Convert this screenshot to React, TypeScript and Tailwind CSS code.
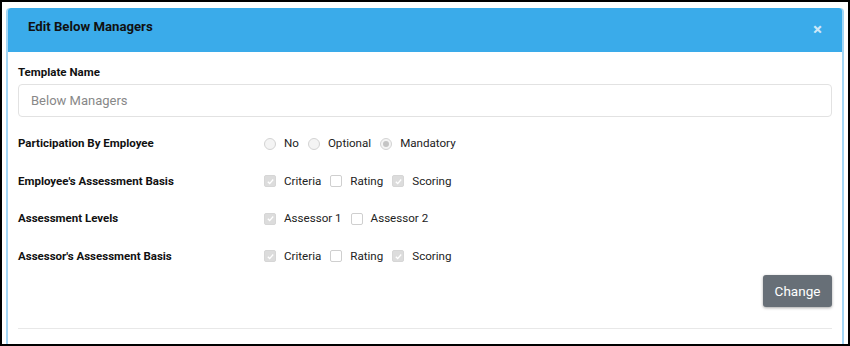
import { type FC } from 'react';

const Radio: FC<{ checked?: boolean; label: string }> = ({ checked, label }) => (
  <label className="flex items-center">
    <span className="flex h-[12px] w-[12px] items-center justify-center rounded-full border border-[#d3d3d3] bg-[#f4f4f4]">
      {checked && <span className="h-[6px] w-[6px] rounded-full bg-[#c4c4c4]" />}
    </span>
    <span className="ml-[8px] mr-[9px] text-[11.6px] text-[#222]">{label}</span>
  </label>
);

const Check: FC<{ checked?: boolean; label: string }> = ({ checked, label }) => (
  <label className="flex items-center">
    <span
      className={
        checked
          ? 'flex h-[12px] w-[12px] items-center justify-center rounded-[2px] border border-[#d6d6d6] bg-[#dcdcdc]'
          : 'flex h-[12px] w-[12px] items-center justify-center rounded-[2px] border border-[#cfcfcf] bg-white'
      }
    >
      {checked && (
        <svg viewBox="0 0 10 10" className="h-[9px] w-[9px]">
          <path d="M2 5.2 L4.1 7.3 L8 2.8" fill="none" stroke="#ffffff" strokeWidth="1.5" />
        </svg>
      )}
    </span>
    <span className="ml-[8px] mr-[9px] text-[11.6px] text-[#222]">{label}</span>
  </label>
);

const Row: FC<{ label: string; children: React.ReactNode }> = ({ label, children }) => (
  <div className="flex h-[37.5px] items-center">
    <div className="w-[246px] text-[11.5px] font-bold text-[#111]">{label}</div>
    <div className="flex items-center">{children}</div>
  </div>
);

export default function App() {
  return (
    <div
      className="h-[346px] w-[850px] overflow-hidden border-2 border-black bg-white pl-[4px] pr-[4px] pt-[6px]"
      style={{ fontFamily: 'Roboto, "Liberation Sans", sans-serif' }}
    >
      <section className="h-[400px] rounded-t-[4px] border-x-2 border-[#a3d6f5] bg-white">
        <header className="flex h-[44px] items-center justify-between rounded-t-[3px] bg-[#3aabea] pb-[6px] pl-[20px] pr-[20px]">
          <h2 className="text-[13.2px] font-bold text-[#111]">Edit Below Managers</h2>
          <button type="button" className="mt-[5px] text-[17px] font-bold leading-none text-[#cfe8f8]">
            ×
          </button>
        </header>
        <div className="px-[10px] pt-[12px]">
          <div className="text-[11.5px] font-bold text-[#111]">Template Name</div>
          <input
            className="mt-[3px] h-[33px] w-full rounded-[4px] border border-[#e2e2e2] px-[12px] text-[13px] text-[#555] outline-none placeholder:text-[#888]"
            placeholder="Below Managers"
          />
          <div className="mt-[8px]">
            <Row label="Participation By Employee">
              <Radio label="No" />
              <Radio label="Optional" />
              <Radio checked label="Mandatory" />
            </Row>
            <Row label="Employee's Assessment Basis">
              <Check checked label="Criteria" />
              <Check label="Rating" />
              <Check checked label="Scoring" />
            </Row>
            <Row label="Assessment Levels">
              <Check checked label="Assessor 1" />
              <Check label="Assessor 2" />
            </Row>
            <Row label="Assessor's Assessment Basis">
              <Check checked label="Criteria" />
              <Check label="Rating" />
              <Check checked label="Scoring" />
            </Row>
          </div>
          <div className="flex justify-end">
            <button
              type="button"
              className="h-[32px] w-[69px] rounded-[3px] bg-[#676f77] text-[13.5px] text-white shadow-[0_1px_3px_rgba(0,0,0,0.35)]"
            >
              Change
            </button>
          </div>
          <div className="mt-[21px] border-t border-[#e8e8e8]" />
        </div>
      </section>
    </div>
  );
}
